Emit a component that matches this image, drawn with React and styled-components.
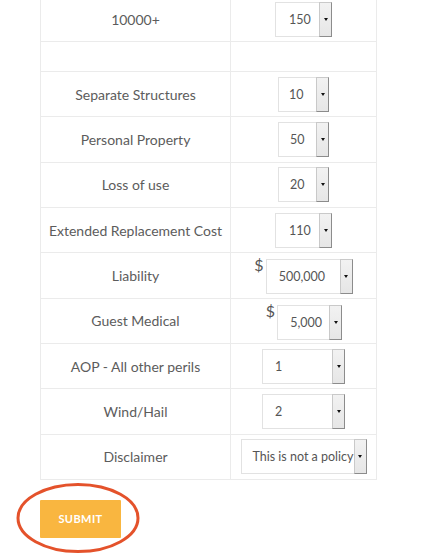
import React from "react";
import styled, { createGlobalStyle } from "styled-components";

const GlobalStyle = createGlobalStyle`
  html, body {
    margin: 0;
    padding: 0;
    background: #fff;
    overflow: hidden;
  }
  body {
    font-family: Lato, "Liberation Sans", sans-serif;
    color: #555;
  }
`;

const Page = styled.div`
  position: relative;
  width: 440px;
  height: 558px;
  padding-left: 40px;
  box-sizing: border-box;
`;

const Table = styled.div`
  width: 337px;
  margin-top: -3px;
  border-left: 1px solid #ebebeb;
  border-right: 1px solid #ebebeb;
  box-sizing: border-box;
`;

const Row = styled.div`
  display: grid;
  grid-template-columns: 190px 1fr;
  height: ${(p) => p.$h || 45.33}px;
  border-bottom: 1px solid #ebebeb;
  box-sizing: border-box;
`;

const Label = styled.div`
  display: flex;
  align-items: center;
  justify-content: center;
  font-size: 14px;
  color: #5c5c5c;
  border-right: 1px solid #ebebeb;
  white-space: nowrap;
`;

const Value = styled.div`
  display: flex;
  align-items: center;
  justify-content: center;
`;

const Money = styled.div`
  display: flex;
  align-items: flex-start;
  gap: 2px;
  margin-left: ${(p) => p.$shift || 0}px;
`;

const Dollar = styled.span`
  font-size: 16px;
  line-height: 16px;
  color: #555;
  margin-top: 1px;
`;

const SelectBox = styled.div`
  display: flex;
  width: ${(p) => p.$w}px;
  height: 35px;
  border: 1px solid #e2e2e2;
  box-sizing: border-box;
  background: #fff;
  margin-top: ${(p) => (p.$money ? 3 : 0)}px;
`;

const SelectText = styled.div`
  flex: 1;
  display: flex;
  align-items: center;
  padding-left: ${(p) => p.$pad}px;
  font-size: 12.5px;
  color: #555;
  overflow: hidden;
  white-space: nowrap;
`;

const Arrow = styled.div`
  width: 13px;
  flex: none;
  margin: -1px -1px -1px 0;
  background: linear-gradient(#f2f2f2, #e6e6e6);
  border: 1px solid #c9c9c9;
  border-right-color: #8c8c8c;
  border-bottom-color: #8c8c8c;
  box-sizing: border-box;
  display: flex;
  align-items: center;
  justify-content: center;

  &::after {
    content: "";
    border-left: 2.5px solid transparent;
    border-right: 2.5px solid transparent;
    border-top: 3px solid #111;
  }
`;

const Footer = styled.div`
  padding-top: 20px;
`;

const SubmitButton = styled.button`
  width: 81px;
  height: 38px;
  border: none;
  border-radius: 1px;
  background: #f9b640;
  color: #fff;
  font-family: Lato, "Liberation Sans", sans-serif;
  font-weight: 700;
  font-size: 11px;
  letter-spacing: 0.4px;
  padding: 0;
`;

const Circle = styled.svg`
  position: absolute;
  left: 14px;
  top: 484px;
  pointer-events: none;
`;

const Select = ({ w, pad = 12, children, money }) => (
  <SelectBox $w={w} $money={money}>
    <SelectText $pad={pad}>{children}</SelectText>
    <Arrow />
  </SelectBox>
);

const rows = [
  { label: "Separate Structures", value: "10", w: 51, pad: 10 },
  { label: "Personal Property", value: "50", w: 51, pad: 11 },
  { label: "Loss of use", value: "20", w: 51, pad: 11 },
  { label: "Extended Replacement Cost", value: "110", w: 57, pad: 13 },
  { label: "Liability", value: "500,000", w: 87, money: true, shift: 0 },
  { label: "Guest Medical", value: "5,000", w: 65, money: true, shift: 1 },
  { label: "AOP - All other perils", value: "1", w: 83, pad: 12 },
  { label: "Wind/Hail", value: "2", w: 83, pad: 12 },
  { label: "Disclaimer", value: "This is not a policy", w: 126, pad: 11 },
];

export default function App() {
  return (
    <>
      <GlobalStyle />
      <Page>
        <Table>
          <Row $h={45}>
            <Label>10000+</Label>
            <Value>
              <Select w={57} pad={13}>150</Select>
            </Value>
          </Row>
          <Row $h={30}>
            <Label />
            <Value />
          </Row>
          {rows.map((r) => (
            <Row key={r.label}>
              <Label>{r.label}</Label>
              <Value>
                {r.money ? (
                  <Money $shift={r.shift}>
                    <Dollar>$</Dollar>
                    <Select w={r.w} pad={12} money>
                      {r.value}
                    </Select>
                  </Money>
                ) : (
                  <Select w={r.w} pad={r.pad}>
                    {r.value}
                  </Select>
                )}
              </Value>
            </Row>
          ))}
        </Table>
        <Footer>
          <SubmitButton>SUBMIT</SubmitButton>
        </Footer>
        <Circle width="130" height="74" viewBox="0 0 130 74">
          <ellipse
            cx="64"
            cy="37"
            rx="60"
            ry="33.5"
            fill="none"
            stroke="#e4522b"
            strokeWidth="3"
          />
        </Circle>
      </Page>
    </>
  );
}
